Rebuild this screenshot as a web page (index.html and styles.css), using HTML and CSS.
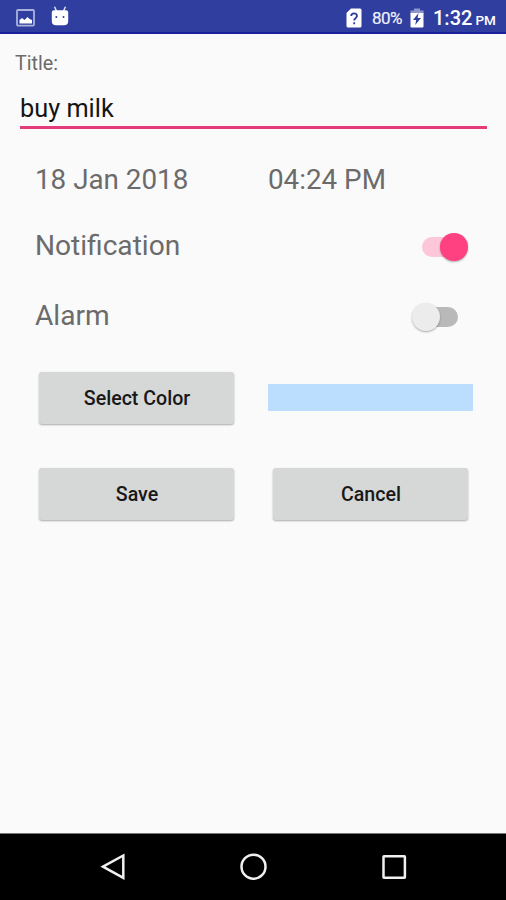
FILE: index.html
```html
<!DOCTYPE html>
<html lang="en">
<head>
<meta charset="utf-8">
<title>Reminder</title>
<link rel="stylesheet" href="styles.css">
</head>
<body>
<header class="status">
  <svg class="ic-image" width="20" height="18" viewBox="0 0 20 18"><rect x="1" y="1" width="17" height="15.600" rx="1" fill="none" stroke="#aab2dc" stroke-width="1.800"/><path d="M3.500 14.500V11l2.500-2 2.500 2 3-3 2 2 2.500 1v3.500z" fill="#fff"/></svg>
  <svg class="ic-android" width="18" height="20" viewBox="0 0 18 20"><path d="M3.500 .8l2 4.200M14.500 .8l-2 4.200" stroke="#dfe3f5" stroke-width="1.500"/><path d="M.8 6Q.8 4.300 3 4.300H15Q17.200 4.300 17.200 6V15Q17.200 19.300 13 19.300H5Q.8 19.300 .8 15z" fill="#fff"/><circle cx="5.300" cy="11" r="1" fill="#303f9f"/><circle cx="12.500" cy="11" r="1" fill="#303f9f"/></svg>
  <svg class="ic-sim" width="16" height="20" viewBox="0 0 16 20"><path d="M5 .5H14Q15.500 .5 15.500 2V18Q15.500 19.500 14 19.500H2Q.5 19.500 .5 18V5z" fill="#fff"/><path d="M5.200 8C5.200 4.500 11 4.500 11 8C11 10 8.200 10 8.200 12.500M8.200 14.200V16.200" fill="none" stroke="#303f9f" stroke-width="1.800"/></svg>
  <span class="percent">80%</span>
  <svg class="ic-battery" width="14" height="20" viewBox="0 0 14 20"><path d="M4 .5H10V2.500H13.500V6H.5V2.500H4z" fill="#8d97ce"/><path d="M.5 5H13.500V18.500Q13.500 19.500 12.500 19.500H1.500Q.5 19.500 .5 18.500z" fill="#fff"/><path d="M8.500 5L3 12H6.200L5.200 17L11 10H7.600z" fill="#303f9f"/></svg>
  <span class="clock">1:32<small>PM</small></span>
</header>
<main>
  <label class="title" for="t">Title:</label>
  <input class="edit" id="t" type="text" value="buy milk">
  <div class="row when"><span>18 Jan 2018</span><span>04:24 PM</span></div>
  <div class="row toggle"><span>Notification</span><i class="switch on"></i></div>
  <div class="row toggle"><span>Alarm</span><i class="switch"></i></div>
  <div class="row actions"><button>Select Color</button><div class="swatch"></div></div>
  <div class="row actions last"><button>Save</button><button>Cancel</button></div>
</main>
<nav class="nav">
  <svg width="30" height="30" viewBox="0 0 30 30"><path d="M5 14.700L25.300 3.500V25.900z"/></svg>
  <svg width="30" height="30" viewBox="0 0 30 30"><circle cx="15.500" cy="14.700" r="12"/></svg>
  <svg width="30" height="30" viewBox="0 0 30 30"><rect x="4.500" y="4.300" width="21.400" height="21.400" rx=".5"/></svg>
</nav>
</body>
</html>
```
FILE: styles.css
```css
* { box-sizing: border-box; }
body {
  margin: 0;
  height: 900px;
  display: flex;
  flex-direction: column;
  overflow: hidden;
  background: #fafafa;
  color: #6b6b6b;
  font-family: Roboto, "Liberation Sans", sans-serif;
}
.status {
  height: 34px;
  flex: none;
  display: flex;
  align-items: center;
  padding: 0 10px 1px 16px;
  background: #303f9f;
  border-bottom: 2px solid #1b219a;
  color: #fff;
}
.status svg { flex: none; }
.ic-image { margin-top: 4px; }
.ic-android { margin-left: 15px; }
.ic-sim { margin: 4px 0 0 auto; }
.ic-battery { margin: 4px 0 0 8px; }
.percent { margin: 4px 0 0 10px; width: 30px; font-size: 17px; letter-spacing: -.6px; color: #f0f2fb; -webkit-text-stroke: .2px #f0f2fb; }
.clock { margin: 4px 0 0 9px; width: 63px; font-size: 20px; font-weight: 500; white-space: nowrap; }
.clock small { margin-left: 3px; font-size: 13.500px; }
main { flex: 1; display: flex; flex-direction: column; }
.title { margin: 18px 0 0 15px; height: 24px; line-height: 24px; font-size: 19.700px; }
.edit {
  margin: 12px 19px 0 20px;
  height: 41px;
  padding: 2px 0 0;
  border: 0;
  border-bottom: 3px solid #e63b7a;
  outline: 0;
  background: none;
  color: #151515;
  font: 25.300px Roboto, sans-serif;
}
.row { display: grid; margin-left: 35px; font-size: 28.100px; }
.when { margin-top: 31px; height: 40px; line-height: 40px; font-size: 27.800px; grid-template-columns: 233px 1fr; }
.toggle { margin-top: 26px; height: 40px; line-height: 40px; grid-template-columns: 376px 1fr; }
.toggle + .toggle { margin-top: 30px; }
.switch {
  position: relative;
  width: 36px;
  height: 20px;
  margin: 11px 0 0 11px;
  border-radius: 10px;
  background: #b9b9b9;
}
.switch::before {
  content: "";
  position: absolute;
  left: -10px;
  top: -4px;
  width: 28px;
  height: 28px;
  border-radius: 50%;
  background: #ececec;
  box-shadow: 0 1px 2px rgba(0, 0, 0, .32);
}
.switch.on { background: #fdc6d9; }
.switch.on::before { left: 18px; background: #ff4081; }
.actions { margin: 36px 0 0 39px; grid-template-columns: 195px 195px; column-gap: 39px; align-items: center; }
.actions.last { margin-top: 44px; }
button {
  height: 52px;
  padding: 1px 0 0 1px;
  border: 0;
  border-radius: 3px;
  background: #d6d7d7;
  box-shadow: 0 1px 2px rgba(0, 0, 0, .32);
  color: #181818;
  font: 500 19.600px Roboto, sans-serif;
}
.swatch { height: 27px; margin: 0 -5px 1px -5px; background: #bbdefe; }
.nav {
  height: 67px;
  flex: none;
  display: flex;
  justify-content: center;
  gap: 110.500px;
  padding-top: 18px;
  border-top: 1px solid #777;
  background: #000;
}
.nav svg { fill: none; stroke: #f0f0f0; stroke-width: 2.500; }
```
